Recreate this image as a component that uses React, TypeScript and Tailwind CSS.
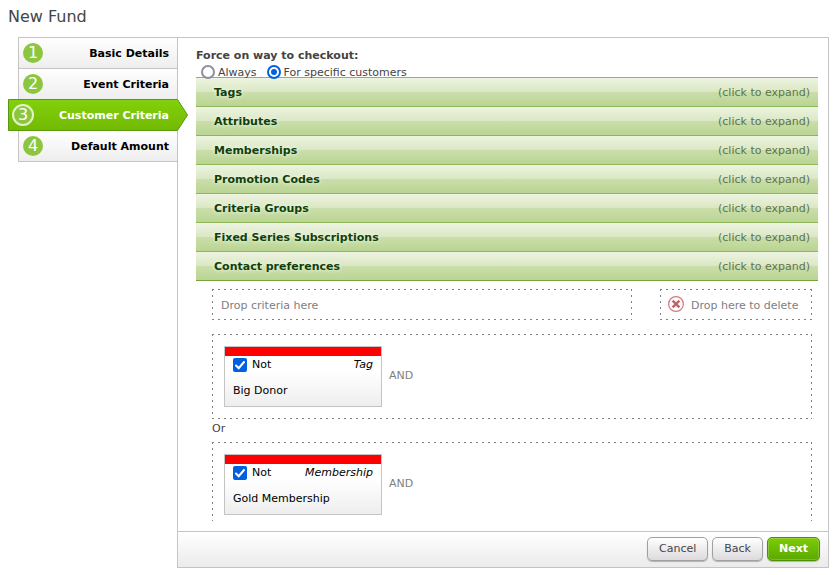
import type { ReactNode } from "react";

const STEPS = ["Basic Details", "Event Criteria", "Customer Criteria", "Default Amount"];
const ACTIVE_STEP = 2;

const SECTIONS = [
  "Tags",
  "Attributes",
  "Memberships",
  "Promotion Codes",
  "Criteria Groups",
  "Fixed Series Subscriptions",
  "Contact preferences",
];

const GROUPS = [
  { type: "Tag", value: "Big Donor" },
  { type: "Membership", value: "Gold Membership" },
];

function Step({ index, label }: { index: number; label: string }) {
  if (index === ACTIVE_STEP) {
    return (
      <li className="relative z-10 -mt-px -mr-[10px] ml-[-11px] h-8">
        {/* Arrow shape behind the label */}
        <svg className="absolute inset-0 h-8 w-[180px]" viewBox="0 0 180 32" aria-hidden="true">
          <defs>
            <linearGradient id="active" x1="0" y1="0" x2="0" y2="1">
              <stop offset="0" stopColor="#82d00c" />
              <stop offset="1" stopColor="#72ba03" />
            </linearGradient>
          </defs>
          <path d="M0.5 0.5H169.5L179.5 16L169.5 31.5H0.5Z" fill="url(#active)" stroke="#549a0c" />
        </svg>
        <a href="#" aria-current="step" className="relative flex h-8 items-center justify-between pr-[18px] pl-1 font-bold text-white">
          <span className="flex size-[22px] items-center justify-center rounded-full border-2 border-[#e3f3c8] bg-[#8cc63f] text-base leading-4 font-normal">
            {index + 1}
          </span>
          <span className="pt-0.5">{label}</span>
        </a>
      </li>
    );
  }
  return (
    <li className="h-[31px] border-b border-[#c4c4c4] bg-linear-to-b from-white to-[#eeeeee]">
      <a href="#" className="flex h-[30px] items-center justify-between pr-2 pl-1 font-bold text-black">
        <span className="flex size-5 items-center justify-center rounded-full bg-[#8cc63f] text-base leading-4 font-normal text-white">
          {index + 1}
        </span>
        <span className="pt-0.5">{label}</span>
      </a>
    </li>
  );
}

// Sparse dashes, two pixels on and four off
function DashedBox({ className, children }: { className: string; children: ReactNode }) {
  return (
    <div
      className={`bg-[repeating-linear-gradient(90deg,#808080_0_2px,transparent_2px_6px),repeating-linear-gradient(90deg,#808080_0_2px,transparent_2px_6px),repeating-linear-gradient(180deg,#808080_0_2px,transparent_2px_6px),repeating-linear-gradient(180deg,#808080_0_2px,transparent_2px_6px)] bg-[length:100%_1px,100%_1px,1px_100%,1px_100%] bg-[position:0_0,0_100%,0_0,100%_0] bg-no-repeat ${className}`}
    >
      {children}
    </div>
  );
}

function CriteriaCard({ type, value }: { type: string; value: string }) {
  return (
    <div className="h-[61px] w-[158px] border border-[#c4c4c4] bg-linear-to-b from-white from-40% to-[#eeeeee] text-black">
      <div className="h-[9px] bg-[#ff0000]" />
      <div className="flex h-[18px] items-center justify-between px-2">
        <label className="flex items-center gap-[5px]">
          <input
            type="checkbox"
            defaultChecked
            className="size-[14px] appearance-none rounded-xs bg-[#0060df] bg-[url('data:image/svg+xml,%3Csvg%20xmlns=%22http://www.w3.org/2000/svg%22%20viewBox=%220%200%2014%2014%22%3E%3Cpath%20d=%22M3%207.5l2.7%202.7L11%204%22%20fill=%22none%22%20stroke=%22white%22%20stroke-width=%222%22%20stroke-linecap=%22round%22/%3E%3C/svg%3E')]"
          />
          Not
        </label>
        <em>{type}</em>
      </div>
      <p className="mt-[10px] px-2">{value}</p>
    </div>
  );
}

function Radio({ label, checked }: { label: string; checked?: boolean }) {
  return (
    <label className="flex items-center gap-[3px]">
      <input
        type="radio"
        name="force"
        defaultChecked={checked}
        className="size-[14px] appearance-none rounded-full border-2 border-[#8f8f9d] bg-white checked:border-[#0060df] checked:bg-[#0060df] checked:bg-clip-content checked:p-[2px]"
      />
      <span className="pt-0.5">{label}</span>
    </label>
  );
}

function Button({ children }: { children: ReactNode }) {
  return (
    <button
      type="button"
      className="h-6 rounded-[5px] border border-[#a0a0a0] bg-linear-to-b from-white to-[#dddadd] px-[11px] text-[#444] shadow-[0_1px_1px_rgba(0,0,0,0.25)]"
    >
      {children}
    </button>
  );
}

export default function App() {
  return (
    <div className="flex h-screen flex-col bg-white pr-2 pb-[7px] pl-2 font-['DejaVu_Sans',Verdana,sans-serif] text-[11px] leading-[14px] text-[#444]">
      <h1 className="h-[37px] pt-[7px] text-base leading-5">New Fund</h1>
      <div className="flex min-h-0 flex-1 pl-[10px]">
        <ol className="w-[159px] shrink-0 self-start border-t border-l border-[#c4c4c4]">
          {STEPS.map((label, i) => (
            <Step key={label} index={i} label={label} />
          ))}
        </ol>

        <main className="flex min-w-0 flex-1 flex-col border border-[#c4c4c4]">
          <div className="min-h-0 flex-1 pt-[11px] pr-[10px] pb-[10px] pl-[18px]">
            <div className="h-full overflow-hidden">
              <fieldset className="h-7">
                <legend className="font-bold">Force on way to checkout:</legend>
                <div className="flex gap-[10px] pt-px pl-[5px]">
                  <Radio label="Always" />
                  <Radio label="For specific customers" checked />
                </div>
              </fieldset>

              {/* Accordion headers */}
              <div className="border-b border-[#76a240]">
                {SECTIONS.map((title) => (
                  <button
                    key={title}
                    type="button"
                    className="flex h-[29px] w-full items-center justify-between border-t border-[#8fb75a] bg-[linear-gradient(#edf4e1,#dae7c3_50%,#cadeab_50%,#bad592)] pt-0.5 pr-2 pl-[18px]"
                  >
                    <span className="font-bold text-[#0f4108] [text-shadow:0_0_4px_white]">{title}</span>
                    <span className="text-[#5f744f]">(click to expand)</span>
                  </button>
                ))}
              </div>

              <div className="pt-2 pr-1.5 pl-4">
                <div className="flex gap-7 text-[#808080]">
                  <DashedBox className="flex h-[31px] flex-1 items-center px-[9px] pt-0.5">Drop criteria here</DashedBox>
                  <DashedBox className="flex h-[31px] w-[152px] items-center gap-[7px] pt-0.5 pl-2">
                    <svg className="mb-1 size-4 shrink-0" viewBox="0 0 16 16" fill="none" aria-hidden="true">
                      <circle cx="8" cy="8" r="7.4" stroke="#cf7b7f" strokeWidth="1.2" />
                      <path d="M4.6 4.6L11.4 11.4M11.4 4.6L4.6 11.4" stroke="#c1656a" strokeWidth="2.6" />
                    </svg>
                    Drop here to delete
                  </DashedBox>
                </div>

                <div className="pt-[14px]">
                  {GROUPS.map((group, i) => (
                    <div key={group.type}>
                      {i > 0 && <p className="pt-[3px] pb-1.5">Or</p>}
                      <DashedBox className="flex h-[85px] items-start gap-[7px] p-3">
                        <CriteriaCard {...group} />
                        <span className="pt-[23px] text-[#808080]">AND</span>
                      </DashedBox>
                    </div>
                  ))}
                </div>
              </div>
            </div>
          </div>

          <footer className="flex h-9 shrink-0 items-start justify-end gap-1 border-t border-[#c4c4c4] bg-linear-to-b from-white to-[#ebebeb] pt-[5px] pr-2">
            <Button>Cancel</Button>
            <Button>Back</Button>
            <button
              type="button"
              className="h-6 rounded-[5px] border border-[#4d8f08] bg-linear-to-b from-[#7dcc06] to-[#5ba800] px-[11px] font-bold text-white shadow-[0_1px_1px_rgba(0,0,0,0.25),inset_0_0_0_1px_rgba(255,255,255,0.2)]"
            >
              Next
            </button>
          </footer>
        </main>
      </div>
    </div>
  );
}
